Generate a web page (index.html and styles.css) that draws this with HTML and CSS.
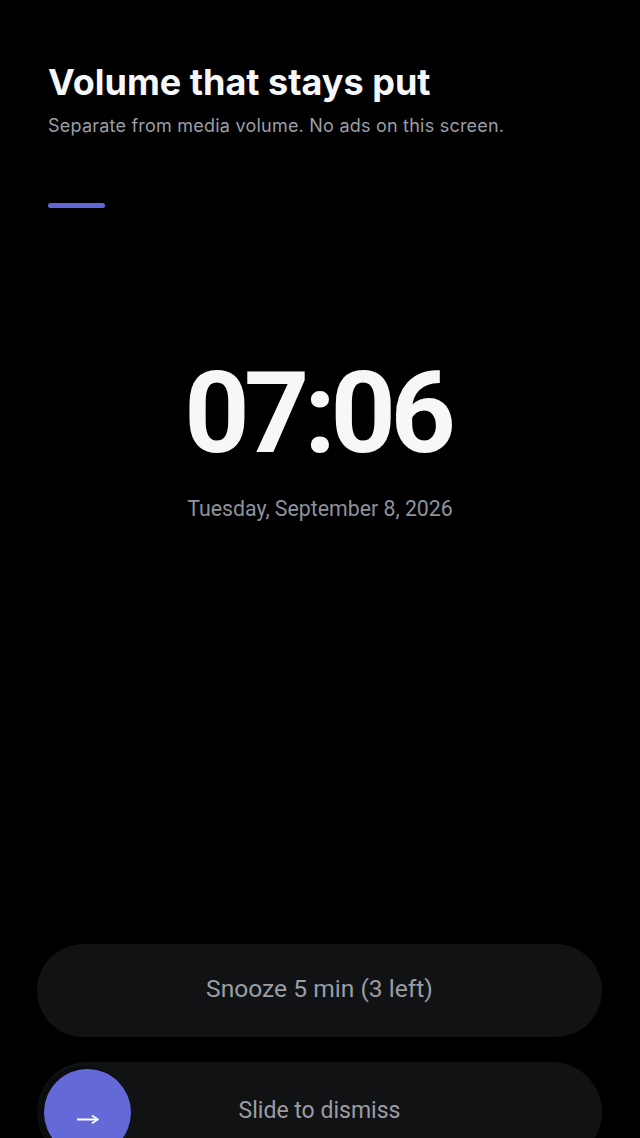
FILE: index.html
```html
<!DOCTYPE html>
<html lang="en">
<head>
<meta charset="utf-8">
<title>Alarm</title>
<link rel="stylesheet" href="styles.css">
</head>
<body>
<div class="screen">
  <header class="intro">
    <h1 class="title">Volume that stays put</h1>
    <p class="subtitle">Separate from media volume. No ads on this screen.</p>
    <div class="accent"></div>
  </header>
  <main class="clock">
    <div class="time">07:06</div>
    <div class="date">Tuesday, September 8, 2026</div>
  </main>
  <footer class="actions">
    <button class="snooze">Snooze 5 min (3 left)</button>
    <div class="slider">
      <div class="knob">
        <svg class="arrow" width="22" height="10" viewBox="0 0 22 10">
          <path d="M0 5.5H19" stroke="#fff" stroke-width="1.8" fill="none"/>
          <path d="M15 1.5L21 5.5L15 9.2" stroke="#fff" stroke-width="1.6" fill="none" stroke-linejoin="miter"/>
        </svg>
      </div>
      <span class="slider-label">Slide to dismiss</span>
    </div>
  </footer>
</div>
</body>
</html>
```
FILE: styles.css
```css
html, body {
  margin: 0;
  padding: 0;
  background: #000;
  height: 1138px;
  overflow: hidden;
}
.screen {
  display: flex;
  flex-direction: column;
  height: 1138px;
}
.intro {
  padding: 61px 48px 0;
}
.title {
  margin: 0;
  font-family: Inter, "Liberation Sans", sans-serif;
  font-weight: 700;
  font-size: 36px;
  line-height: 42px;
  letter-spacing: 0;
  color: #f6f7f8;
}
.subtitle {
  margin: 11px 0 0;
  font-family: Inter, "Liberation Sans", sans-serif;
  font-size: 18px;
  line-height: 24px;
  letter-spacing: 0.22px;
  color: #9a9ea6;
}
.accent {
  margin-top: 65px;
  width: 57px;
  height: 5px;
  border-radius: 3px;
  background: #5f66d6;
}
.clock {
  display: flex;
  flex-direction: column;
  align-items: center;
  margin-top: 149px;
}
.time {
  font-family: Roboto, "Liberation Sans", sans-serif;
  font-weight: 700;
  font-size: 114px;
  line-height: 112px;
  color: #f6f7f8;
  letter-spacing: -5.5px;
  margin-right: 5.5px;
}
.date {
  margin-top: 26px;
  font-family: Roboto, "Liberation Sans", sans-serif;
  font-size: 21.3px;
  line-height: 28px;
  color: #8e929a;
}
.actions {
  margin-top: auto;
  padding: 0 38px 0 37px;
  display: flex;
  flex-direction: column;
  gap: 25px;
  margin-bottom: -24px;
}
.snooze {
  height: 93px;
  border: none;
  border-radius: 47px;
  background: #111214;
  font-family: Roboto, "Liberation Sans", sans-serif;
  font-size: 24.6px;
  color: #9a9da4;
  padding: 0 0 4px;
}
.slider {
  position: relative;
  height: 100px;
  border-radius: 50px;
  background: #111214;
  overflow: hidden;
  display: flex;
  align-items: center;
  justify-content: center;
}
.knob {
  position: absolute;
  left: 7px;
  top: 7px;
  width: 87px;
  height: 87px;
  border-radius: 50%;
  background: #6369d6;
  box-shadow: -4px 0 0 3px #0b0c0e;
  display: flex;
  align-items: center;
  justify-content: center;
}
.arrow {
  margin-top: 12px;
}
.slider-label {
  font-family: Roboto, "Liberation Sans", sans-serif;
  font-size: 23px;
  color: #9a9da4;
  margin-top: -3px;
}
```
